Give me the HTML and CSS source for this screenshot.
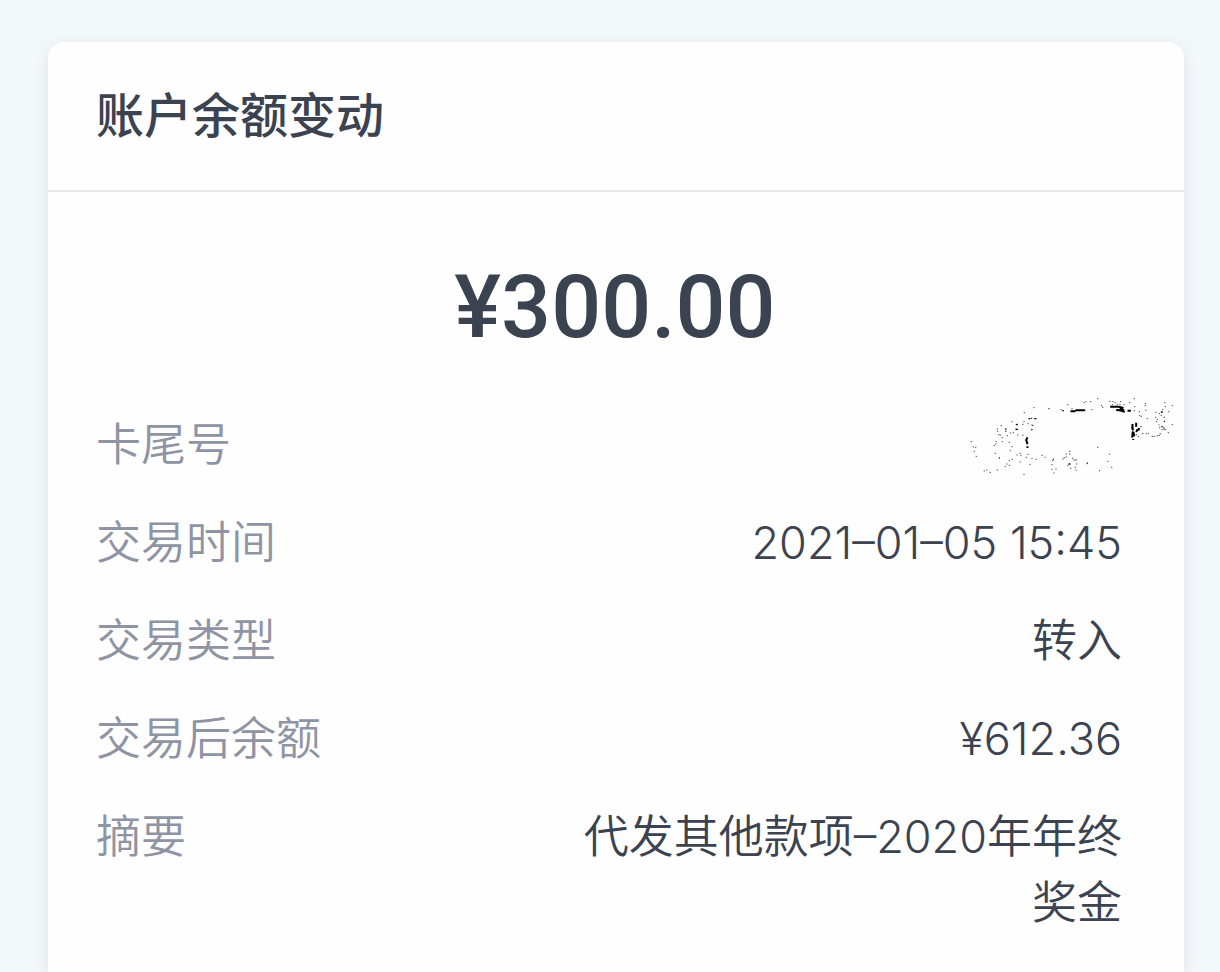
FILE: index.html
```html
<!DOCTYPE html>
<html lang="zh-CN">
<head>
    <meta charset="UTF-8">
    <meta name="viewport" content="width=device-width, initial-scale=1.0">
    <title>账户余额变动</title>
    <link rel="stylesheet" href="styles.css">
</head>
<body>
    <main class="card">
        <header class="card-header">
            <h1 class="card-title">账户余额变动</h1>
        </header>

        <div class="card-body">
            <p class="amount">¥300.00</p>

            <dl class="details">
                <div class="row">
                    <dt>卡尾号</dt>
                    <dd>
                        <!-- erased card number -->
                        <svg class="scribble" viewBox="60 50 620 240" aria-hidden="true">
                            <path class="dots" d="M63 187h1M69 203h1M76 204h1M72 216h1M78 231h1M102 275h1M109 272h1M120 279h1M141 272h1M165 262h1M170 254h1M177 258h1M177 244h1M186 240h1M200 227h1M209 222h1M212 229h1M210 248h1M228 234h1M233 225h1M245 237h1M257 240h1M239 255h1M221 285h1M275 228h1M284 234h1M132 199h1M136 194h1M138 187h1M156 187h1M135 222h1M177 189h1M185 202h1M142 156h1M141 149h1M153 139h1M145 166h1M150 167h1M156 175h1M171 169h1M180 161h1M185 127h1M189 160h1M202 167h1M218 168h1M217 135h1M221 127h1M233 133h1M222 100h1M251 85h1M245 137h1M305 270h1M305 256h1M307 244h1M317 269h1M311 281h1M338 239h1M342 235h1M348 224h1M358 216h1M348 233h1M353 258h1M361 267h1M367 237h1M371 242h1M375 264h1M377 272h1M379 254h1M410 253h1M442 204h1M478 225h1M472 246h1M484 264h1M332 91h1M352 76h1M365 88h1M401 70h1M407 67h1M421 67h1M424 91h1M442 58h1M454 79h1M457 84h1M479 67h1M488 67h1M486 76h1M495 70h1M501 76h1M511 67h1M509 75h1M521 76h1M538 70h1M552 58h1M564 49h1M552 94h1M553 82h1M567 97h1M568 109h1M573 111h1M585 73h1M585 79h1M586 93h1M591 118h1M588 163h1M577 163h1M594 162h1M606 171h1M612 171h1M621 169h1M627 168h1M630 163h1M616 114h1M619 127h1M621 120h1M617 99h1M627 103h1M633 108h1M637 91h1M643 70h1M645 82h1M655 97h1M666 79h1M666 136h1M654 160h1M645 151h1M640 144h1M635 151h1M628 145h1M626 137h1M642 114h1M564 171h1M558 166h1"/>
                            <path class="specks" d="M146 236h3M167 147v4M167 154v3M179 214h2M196 149l8 2M197 136h6M201 133v3M235 118h6M243 117h3M252 118h7M243 151h4M248 138v2M295 88h3M336 94h5M308 240h3M358 224h2M355 254h6M376 242h3M447 274h2M411 252l2-2M632 98h6M643 124v4M636 140v4M640 149h3M571 142l3-1"/>
                            <path class="strokes" d="M361 96h15M376 93h29M480 82h26l14 4M498 92l10 1 16 4M508 89l14 4M532 94h10M232 174l-4 8 3 8v5M232 201v5M547 134v16M545 142l4 11M548 156l-2 19M550 158l2 13M558 130v12M562 150l-4 8M567 146l-3 8M549 179v3"/>
                        </svg>
                    </dd>
                </div>
                <div class="row">
                    <dt>交易时间</dt>
                    <dd>2021–01–05 15:45</dd>
                </div>
                <div class="row">
                    <dt>交易类型</dt>
                    <dd>转入</dd>
                </div>
                <div class="row">
                    <dt>交易后余额</dt>
                    <dd>¥612.36</dd>
                </div>
                <div class="row">
                    <dt>摘要</dt>
                    <dd>代发其他款项–2020年年终奖金</dd>
                </div>
            </dl>
        </div>
    </main>
</body>
</html>
```
FILE: styles.css
```css
* {
    box-sizing: border-box;
}

body {
    margin: 0;
    min-height: 100vh;
    padding: 42px 36px 0 48px;
    display: flex;
    flex-direction: column;
    background-color: #f3f8f9;
    color: #3b4250;
    font-family: Inter, "Noto Sans CJK SC", sans-serif;
}

/* Card */
.card {
    flex: 1;
    background-color: #fefefe;
    border-radius: 16px 16px 0 0;
    box-shadow: 0 4px 16px rgba(110, 90, 180, 0.14);
}

.card-header {
    padding: 38px 48px;
    border-bottom: 2px solid #e4e6e9;
}

.card-title {
    margin: 0;
    font-size: 48px;
    font-weight: 500;
    line-height: 72px;
}

.card-body {
    padding: 60px 62px 36px 48px;
}

.amount {
    margin: 0 0 50px;
    padding-left: 12px;
    font-family: Roboto, sans-serif;
    font-size: 88px;
    font-weight: 500;
    line-height: 110px;
    text-align: center;
}

/* Detail rows */
.details {
    margin: 0;
    display: flex;
    flex-direction: column;
    gap: 32px;
    font-size: 45px;
    font-weight: 350;
    line-height: 66px;
}

.row {
    display: flex;
    justify-content: space-between;
}

.row dt {
    color: #8e94a3;
}

.row dd {
    margin: 0;
    max-width: 54%;
    text-align: right;
}

.scribble {
    display: block;
    width: 207px;
    height: 80px;
    margin: -16px -55px 0 0;
    fill: none;
    stroke: #000;
}

.dots {
    stroke: #555;
    stroke-width: 3;
    stroke-linecap: square;
}

.specks {
    stroke: #111;
    stroke-width: 4;
}

.strokes {
    stroke-width: 6;
}
```
